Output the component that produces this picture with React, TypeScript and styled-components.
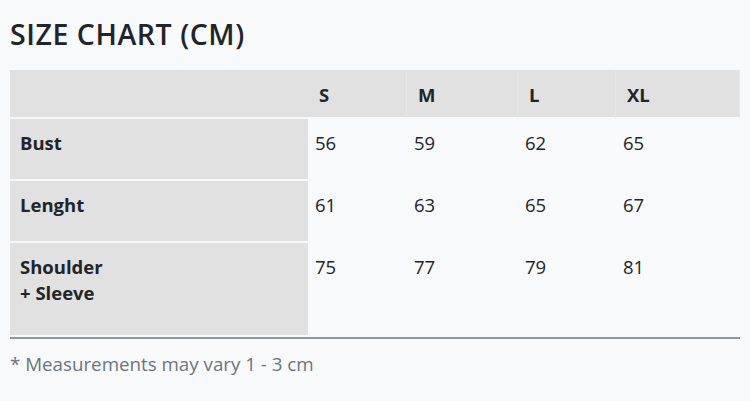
import React from "react";
import styled, { createGlobalStyle } from "styled-components";

const Global = createGlobalStyle`
  html, body { margin: 0; padding: 0; background: #f8f9fa; }
  body { font-family: "Open Sans", "Noto Sans", sans-serif; color: #212529; }
`;

const Page = styled.div`
  padding: 16px 10px 0 10px;
  width: 730px;
`;

const Title = styled.h1`
  margin: 0 0 18px 0;
  font-size: 28.5px;
  line-height: 36px;
  font-weight: 600;
  color: #212529;
  letter-spacing: 0.55px;
`;

const Table = styled.table`
  width: 730px;
  border-collapse: separate;
  border-spacing: 0;
  table-layout: fixed;
  font-size: 18.5px;
  border-bottom: 2px solid #8f969c;
`;

const HeadCell = styled.th<{ $first?: boolean }>`
  background: #e1e1e1;
  height: 49px;
  padding: 1px 0 0 11px;
  text-align: left;
  vertical-align: middle;
  font-weight: 700;
  font-size: 18.5px;
  border-bottom: 2px solid #f8f9fa;
  border-right: ${(p) => (p.$first ? "0" : "1px solid #e6e6e6")};
  box-sizing: border-box;
`;

const LabelCell = styled.th<{ $h: number }>`
  background: #e1e1e1;
  height: ${(p) => p.$h}px;
  padding: 11px 0 0 10px;
  text-align: left;
  vertical-align: top;
  font-weight: 700;
  line-height: 25.5px;
  border-bottom: 2px solid #f8f9fa;
  box-sizing: border-box;
`;

const DataCell = styled.td<{ $h: number }>`
  height: ${(p) => p.$h}px;
  padding: 11px 0 0 7px;
  vertical-align: top;
  line-height: 25.5px;
  border-bottom: 2px solid #f8f9fa;
  box-sizing: border-box;
  font-weight: 400;
`;

const Note = styled.p`
  margin: 12px 0 0 0;
  font-size: 18.75px;
  line-height: 26px;
  color: #6c757d;
`;

const sizes = ["S", "M", "L", "XL"];
const rows: { label: React.ReactNode; values: number[]; h: number }[] = [
  { label: "Bust", values: [56, 59, 62, 65], h: 62 },
  { label: "Lenght", values: [61, 63, 65, 67], h: 62 },
  {
    label: (
      <>
        Shoulder
        <br />+ Sleeve
      </>
    ),
    values: [75, 77, 79, 81],
    h: 94,
  },
];

const colWidths = [298, 99, 111, 98, 124];

export default function App() {
  return (
    <Page>
      <Global />
      <Title>SIZE CHART (CM)</Title>
      <Table>
        <colgroup>
          {colWidths.map((w, i) => (
            <col key={i} style={{ width: w }} />
          ))}
        </colgroup>
        <thead>
          <tr>
            <HeadCell $first />
            {sizes.map((s) => (
              <HeadCell key={s}>{s}</HeadCell>
            ))}
          </tr>
        </thead>
        <tbody>
          {rows.map((r, i) => (
            <tr key={i}>
              <LabelCell $h={r.h}>{r.label}</LabelCell>
              {r.values.map((v, j) => (
                <DataCell key={j} $h={r.h}>
                  {v}
                </DataCell>
              ))}
            </tr>
          ))}
        </tbody>
      </Table>
      <Note>* Measurements may vary 1 - 3 cm</Note>
    </Page>
  );
}
